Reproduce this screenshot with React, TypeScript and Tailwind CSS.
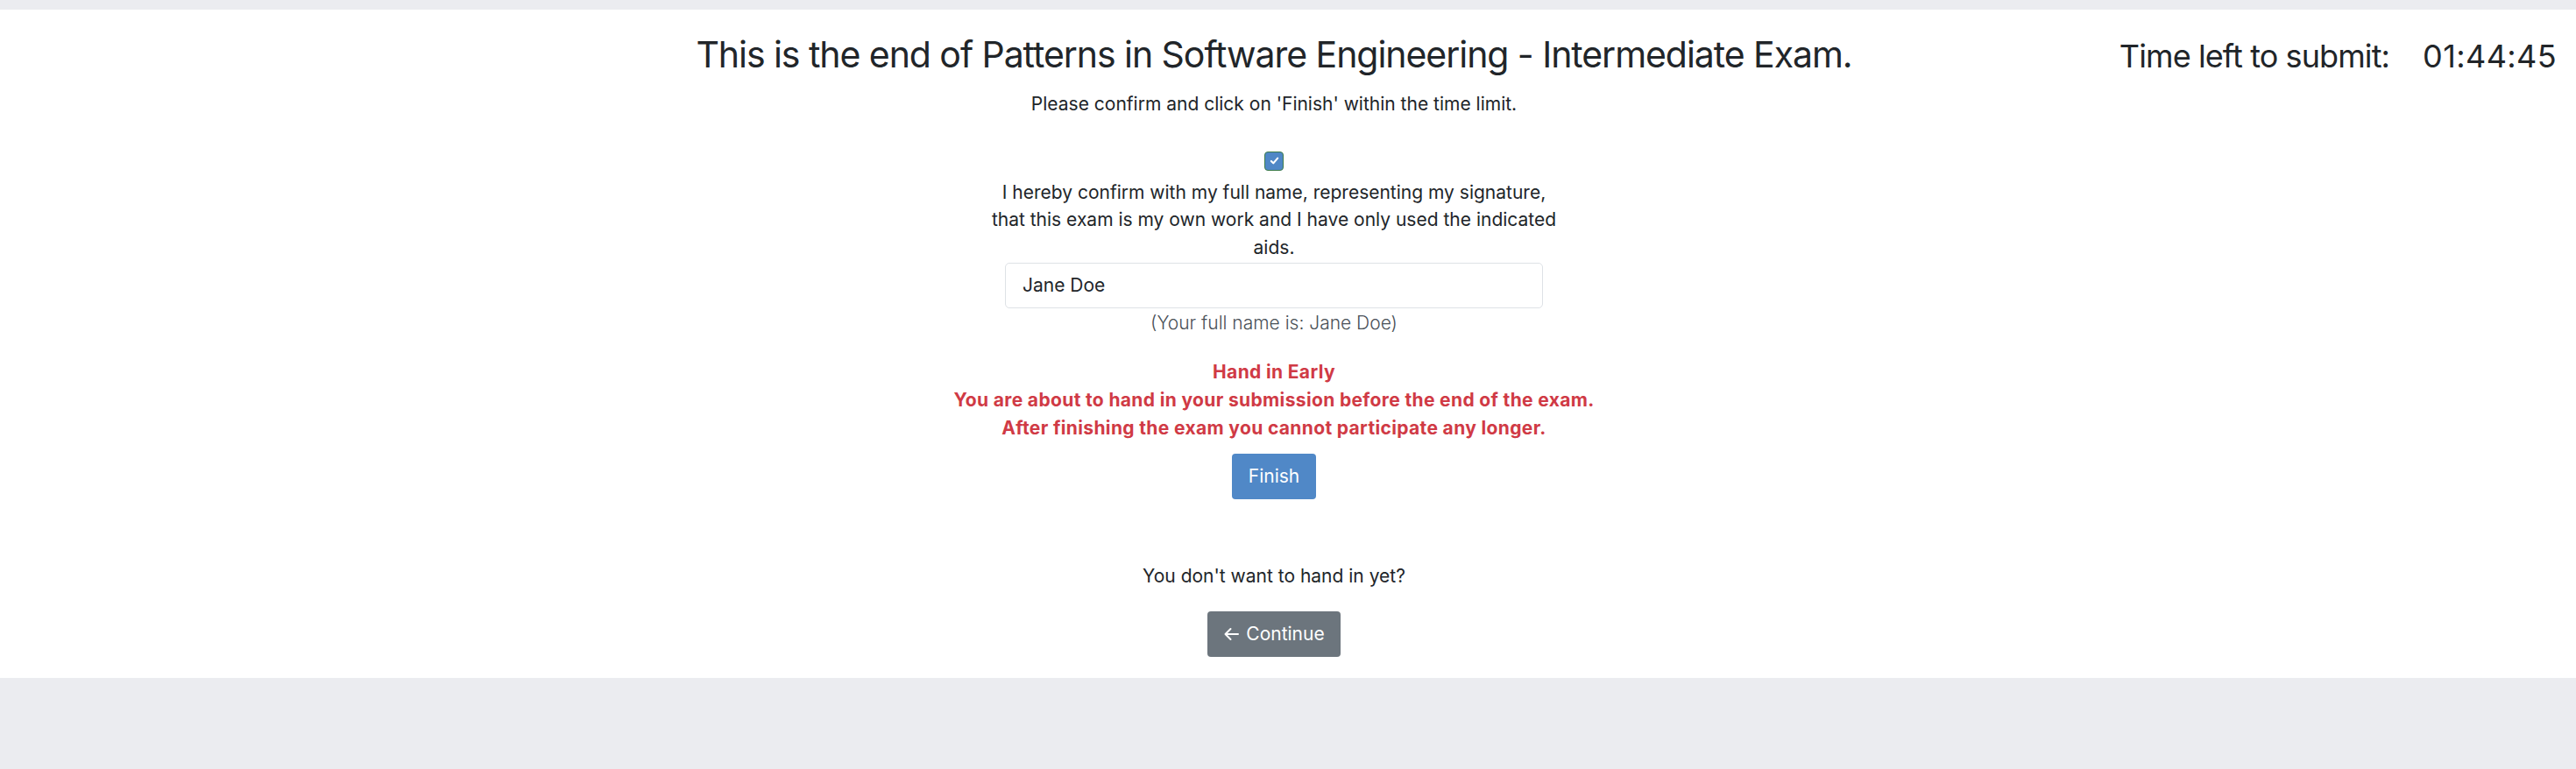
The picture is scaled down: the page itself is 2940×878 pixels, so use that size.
import React from 'react';

const CheckIcon: React.FC = () => (
  <svg viewBox="0 0 16 16" className="w-[13px] h-[13px]" fill="none">
    <path d="M3.5 8.5l3 3 6-7" stroke="white" strokeWidth="2.6" strokeLinecap="round" strokeLinejoin="round" />
  </svg>
);

const ArrowLeft: React.FC = () => (
  <svg viewBox="0 0 18 16" className="w-[18px] h-[16px]" fill="none">
    <path d="M17 8H2.5M8.5 2L2.5 8l6 6" stroke="white" strokeWidth="2" strokeLinecap="round" strokeLinejoin="round" />
  </svg>
);

const App: React.FC = () => {
  return (
    <div
      className="min-h-screen bg-[#ebecf0] pt-[11px] text-[#212529]"
      style={{ fontFamily: 'Inter, "Noto Sans", sans-serif' }}
    >
      <div className="bg-white pt-[27px] pb-[24px] pr-[32px]">
        <div className="grid grid-cols-[1fr_auto_1fr] items-baseline">
          <div />
          <h1 className="text-[41px] leading-[49px] font-normal tracking-[-1.05px] whitespace-nowrap">
            This is the end of Patterns in Software Engineering - Intermediate Exam.
          </h1>
          <div className="justify-self-end -mr-[10px] flex gap-[38px] text-[36px] leading-[43px] whitespace-nowrap">
            <span className="tracking-[-0.9px]">Time left to submit:</span>
            <span className="tracking-[0.4px]">01:44:45</span>
          </div>
        </div>

        <div className="flex flex-col items-center text-[21px] leading-[31.5px] text-center">
          <p className="mt-[16px]">Please confirm and click on 'Finish' within the time limit.</p>

          <span className="mt-[38px] w-[22px] h-[22px] rounded-[4px] bg-[#4f87c6] border border-[#3f7d4a] flex items-center justify-center">
            <CheckIcon />
          </span>

          <p className="mt-[9px] w-[660px]">
            I hereby confirm with my full name, representing my signature, that this exam is my own work and I have
            only used the indicated aids.
          </p>

          <div className="mt-[2px] w-[614px] h-[52px] border border-[#dee2e6] rounded-[5px] px-[19px] flex items-center text-left">
            Jane Doe
          </div>

          <p className="mt-[1px] font-light text-[#495057]">(Your full name is: Jane Doe)</p>

          <div className="mt-[24px] font-bold text-[#d03a45] leading-[32px] tracking-[0.35px] whitespace-nowrap">
            <p>Hand in Early</p>
            <p>You are about to hand in your submission before the end of the exam.</p>
            <p>After finishing the exam you cannot participate any longer.</p>
          </div>

          <button className="mt-[13px] w-[96px] h-[52px] rounded-[4px] bg-[#5088c7] text-white">Finish</button>

          <p className="mt-[72px]">You don't want to hand in yet?</p>

          <button className="mt-[25px] w-[152px] h-[52px] rounded-[4px] bg-[#6c757d] text-white flex items-center justify-center gap-[8px]">
            <ArrowLeft />
            <span>Continue</span>
          </button>
        </div>
      </div>
    </div>
  );
};

export default App;
